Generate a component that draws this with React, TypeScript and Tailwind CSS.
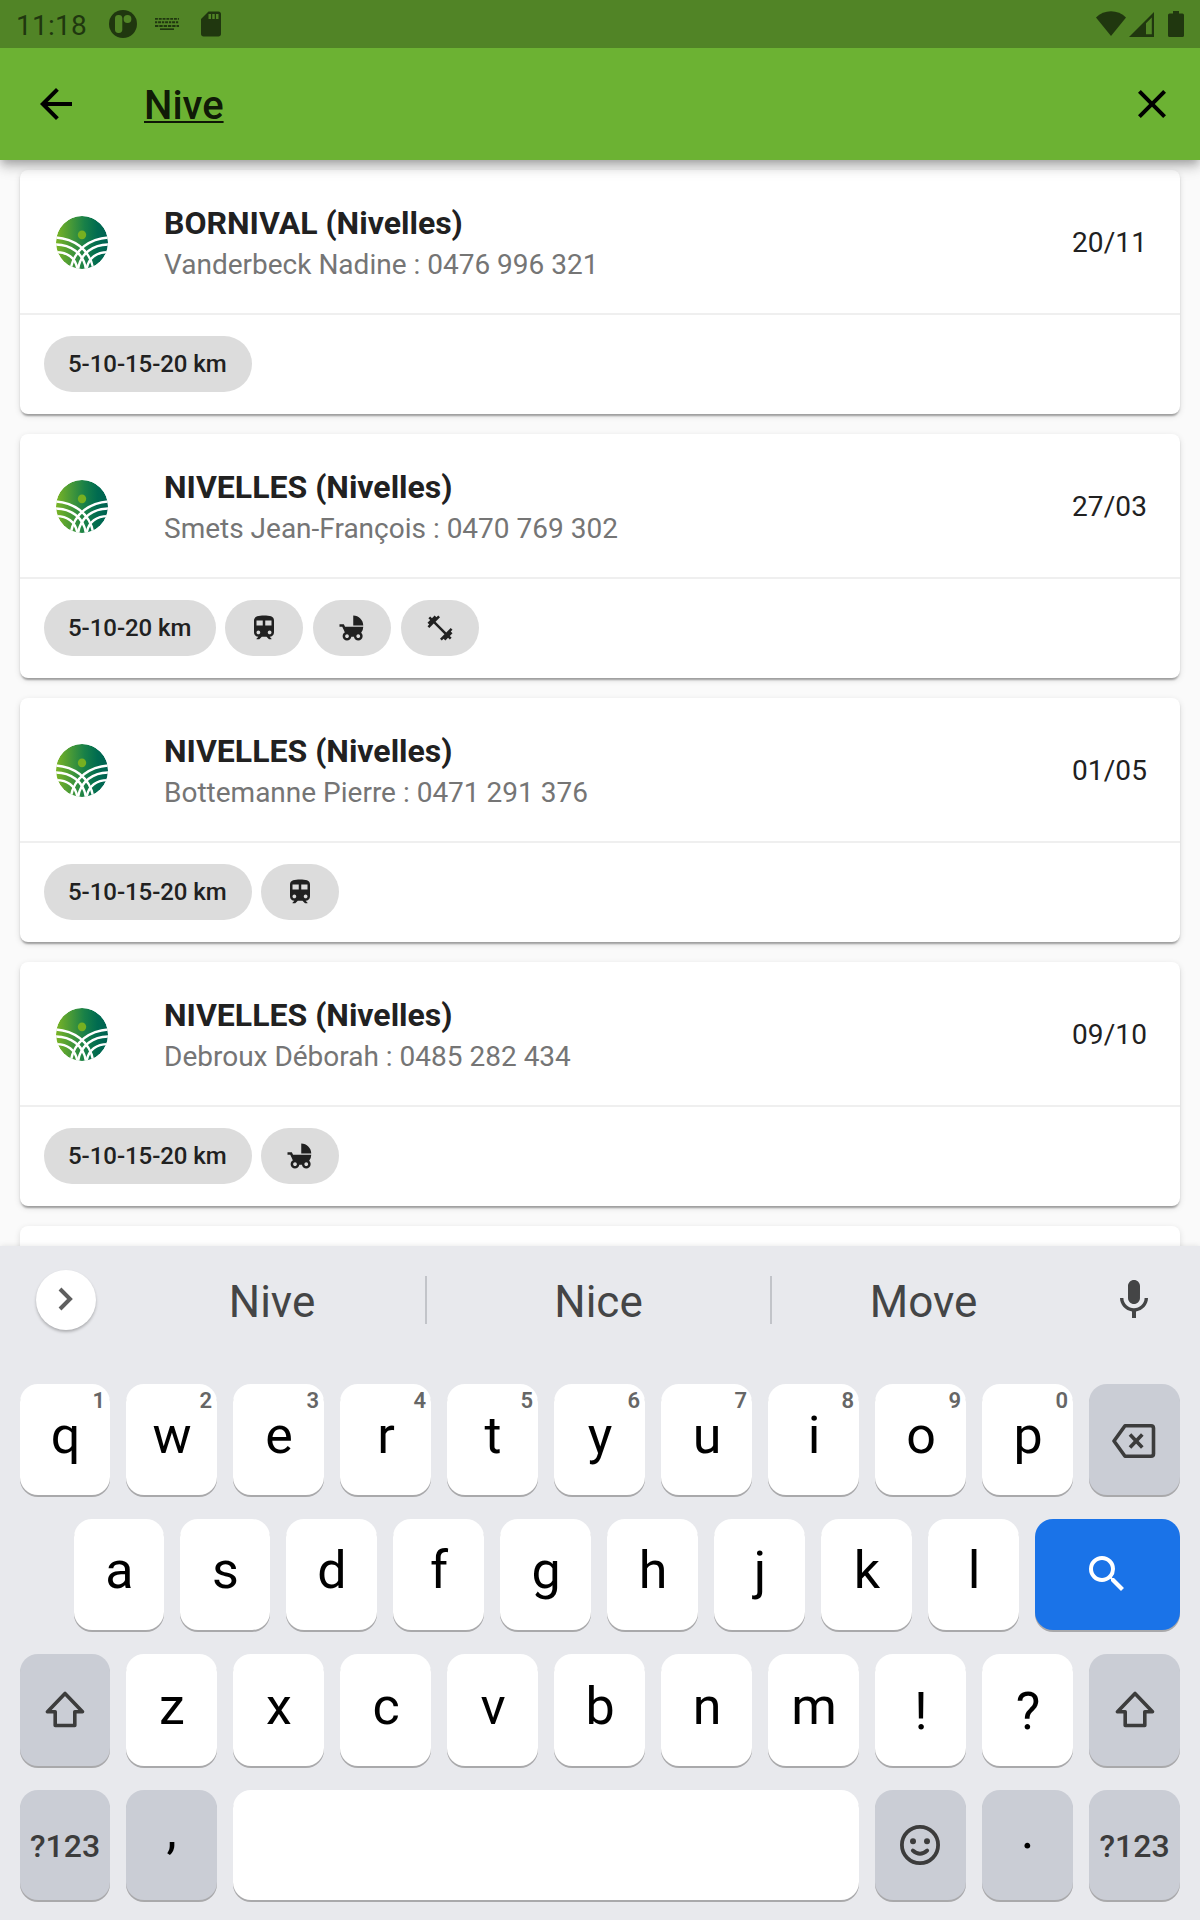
import type { ReactNode } from 'react';
import { MdArrowBack, MdClose, MdSdCard, MdTrain, MdChildFriendly, MdFitnessCenter, MdMic, MdSearch } from 'react-icons/md';

type Service = 'train' | 'stroller' | 'fitness';

interface Walk {
  town: string;
  contact: string;
  date: string;
  distances: string;
  services: Service[];
}

const walks: Walk[] = [
  { town: 'BORNIVAL (Nivelles)', contact: 'Vanderbeck Nadine : 0476 996 321', date: '20/11', distances: '5-10-15-20 km', services: [] },
  { town: 'NIVELLES (Nivelles)', contact: 'Smets Jean-François : 0470 769 302', date: '27/03', distances: '5-10-20 km', services: ['train', 'stroller', 'fitness'] },
  { town: 'NIVELLES (Nivelles)', contact: 'Bottemanne Pierre : 0471 291 376', date: '01/05', distances: '5-10-15-20 km', services: ['train'] },
  { town: 'NIVELLES (Nivelles)', contact: 'Debroux Déborah : 0485 282 434', date: '09/10', distances: '5-10-15-20 km', services: ['stroller'] },
];

const serviceIcons: Record<Service, ReactNode> = {
  train: <MdTrain size={30} />,
  stroller: <MdChildFriendly size={30} />,
  fitness: <MdFitnessCenter size={30} />,
};

function StatusBar() {
  return (
    <div className="relative z-20 flex h-12 shrink-0 items-center bg-[#518426] pl-4 text-[#20370f]">
      <span className="mt-[3px] w-[93px] text-[28px] leading-[34px] tracking-[0.25px]">11:18</span>
      <svg className="size-7" viewBox="0 0 28 28">
        <circle cx="14" cy="14" r="14" fill="currentColor" />
        <rect x="6" y="5" width="7.3" height="18" rx="3.4" fill="#518426" />
        <circle cx="18.5" cy="9" r="3.9" fill="#518426" />
      </svg>
      <svg className="ml-[18px] h-3 w-6" viewBox="0 0 24 12" stroke="currentColor" strokeWidth="1.9">
        <path d="M0 .9h24" strokeDasharray="2.9 .9" />
        <path d="M0 4.3h24" strokeDasharray="2.2 .9 3 .9" />
        <path d="M0 8h24" strokeDasharray="3.4 .9" />
        <path d="M5 11.2h14" strokeWidth="1.7" />
      </svg>
      <MdSdCard size={30} className="ml-[17px]" />
      <svg className="ml-auto mt-[-1px] h-[25px] w-[30px]" viewBox="0 0 30 25" fill="currentColor">
        <path d="M15 25 0 6.500C8-1.900 22-1.900 30 6.500Z" />
      </svg>
      <svg className="ml-[3px] h-[25px] w-[25px]" viewBox="0 0 25 25" fill="currentColor" fillRule="evenodd">
        <path d="M25 0v25H0ZM22.800 5.500 17 11.300V22.300H22.800Z" />
      </svg>
      <svg className="mr-4 ml-[14px] h-[26px] w-4" viewBox="0 0 16 26" fill="currentColor">
        <path d="M5 0h6v2.500h3.400q1.600 0 1.600 1.600v20.300q0 1.600-1.600 1.600H1.600Q0 26 0 24.400V4.100q0-1.600 1.600-1.600H5Z" />
      </svg>
    </div>
  );
}

function SearchBar() {
  return (
    <header className="relative z-10 flex h-28 shrink-0 items-center bg-[#6cb233] pr-6 pl-8 text-black shadow-[0_4px_8px_-2px_rgba(0,0,0,0.2),0_8px_10px_0_rgba(0,0,0,0.14),0_2px_20px_0_rgba(0,0,0,0.12)]">
      <MdArrowBack size={48} />
      <span className="mt-1 ml-16 flex-1 text-[40px] leading-[48px] font-medium text-black/87 underline decoration-2 underline-offset-2 [text-decoration-skip-ink:none]">
        Nive
      </span>
      <MdClose size={48} />
    </header>
  );
}

function ClubLogo() {
  return (
    <svg className="mt-0.5 h-[53px] w-[52px]" viewBox="0 0 52 52" preserveAspectRatio="none">
      <defs>
        <linearGradient id="club" x1="0" y1="0" x2="1" y2="0">
          <stop offset="0" stopColor="#7ab425" />
          <stop offset="0.55" stopColor="#188048" />
          <stop offset="0.8" stopColor="#006b50" />
          <stop offset="1" stopColor="#006152" />
        </linearGradient>
        <clipPath id="disc">
          <circle cx="26" cy="26" r="26" />
        </clipPath>
      </defs>
      <g clipPath="url(#disc)">
        <circle cx="26" cy="26" r="26" fill="url(#club)" />
        <circle cx="26" cy="18.500" r="4.200" fill="#76b021" />
        <g fill="none" stroke="#fff" strokeWidth="2.400">
          <path d="M-1 21C17 22 34 32 37.500 53" />
          <path d="M-1 28C14 28 28 36 30 53" />
          <path d="M-1 35.500C11 35 20 41 21.500 53" />
          <path d="M53 21C35 22 18 32 14.500 53" />
          <path d="M53 28C38 28 24 36 22 53" />
          <path d="M53 35.500C41 35 32 41 30.500 53" />
        </g>
      </g>
    </svg>
  );
}

function WalkCard({ walk }: { walk: Walk }) {
  return (
    <article className="h-[244px] shrink-0 rounded-lg bg-white text-[#212121] shadow-[0_4px_2px_-2px_rgba(0,0,0,0.2),0_2px_2px_0_rgba(0,0,0,0.14),0_2px_6px_0_rgba(0,0,0,0.12)]">
      <div className="flex h-[145px] items-center border-b-2 border-[#efefef] pr-[33px] pl-9">
        <ClubLogo />
        <div className="mt-[3px] ml-14 flex-1">
          <h2 className="text-[32px] leading-[38px] font-bold">{walk.town}</h2>
          <p className="mt-1.5 text-[28px] leading-[34px] text-[#757575]">{walk.contact}</p>
        </div>
        <time className="mt-0.5 text-[28px] leading-[34px] tracking-[0.1px]">{walk.date}</time>
      </div>
      <div className="flex gap-2.5 px-6 pt-[21px]">
        <span className="-mr-px flex h-14 items-center rounded-full bg-[#dcdcdc] pr-[25px] pl-6 text-2xl font-medium tracking-[-0.05px]">{walk.distances}</span>
        {walk.services.map((service) => (
          <span key={service} className="flex h-14 w-[78px] items-center justify-center rounded-full bg-[#dcdcdc]">
            {serviceIcons[service]}
          </span>
        ))}
      </div>
    </article>
  );
}

const tones = {
  light: 'bg-white text-black',
  dark: 'bg-[#cacdd5] text-[#3c3c3c]',
  blue: 'bg-[#1a73e8] text-white',
};

function Key({ tone = 'light', className = '', children }: { tone?: keyof typeof tones; className?: string; children?: ReactNode }) {
  return (
    <div className={`relative flex min-w-0 justify-center rounded-[18px] shadow-[0_2px_0_#a9a9ab] ${tones[tone]} ${className}`}>{children}</div>
  );
}

function Letter({ char, hint, offset = 'mt-[22px]' }: { char: string; hint?: string; offset?: string }) {
  return (
    <Key>
      <span className={`ml-px text-[52px] leading-[60px] ${offset}`}>{char}</span>
      {hint && <span className="absolute top-1 right-[5px] text-[22px] leading-[26px] font-semibold text-[#666]">{hint}</span>}
    </Key>
  );
}

function SymbolsKey() {
  return (
    <Key tone="dark">
      <span className="mt-9 text-[32px] leading-10 font-medium">?123</span>
    </Key>
  );
}

function ShiftKey() {
  return (
    <Key tone="dark" className="items-start">
      <svg className="mt-[37px] h-[37px] w-10" viewBox="0 0 40 37" fill="none" stroke="currentColor" strokeWidth="3.600" strokeLinejoin="round">
        <path d="M20 2.500 2.500 20.800H10.200V34.500H29.800V20.800H37.500Z" />
      </svg>
    </Key>
  );
}

function Keyboard() {
  return (
    <section className="relative z-10 flex h-[674px] shrink-0 flex-col bg-[#e8e9ed] shadow-[0_0_6px_rgba(0,0,0,0.1)]">
      <div className="flex h-[138px] items-start pt-6 text-[44px] leading-[52px] text-[#444546]">
        <div className="ml-9 flex size-[60px] items-center justify-center rounded-full bg-white shadow-[0_2px_3px_rgba(0,0,0,0.25)]">
          <svg className="-mt-0.5 -ml-px h-6 w-4" viewBox="0 0 16 24" fill="none" stroke="#5f5f5f" strokeWidth="4">
            <path d="M2 2 12 12 2 22" />
          </svg>
        </div>
        <span className="mt-1.5 ml-[23px] w-[306px] text-center">Nive</span>
        <span className="mt-1.5 h-12 w-0.5 bg-[#c2c4c9]" />
        <span className="mt-1.5 w-[343px] text-center">Nice</span>
        <span className="mt-1.5 h-12 w-0.5 bg-[#c2c4c9]" />
        <span className="mt-1.5 w-[303px] text-center">Move</span>
        <MdMic size={48} className="mt-1.5 ml-[35px]" />
      </div>

      <div className="grid h-[111px] grid-cols-[90px_repeat(10,91px)] gap-4 px-5">
        {'qwertyuiop'.split('').map((char, i) => (
          <Letter key={char} char={char} hint={String((i + 1) % 10)} />
        ))}
        <Key tone="dark" className="items-start">
          <svg className="mt-10 -ml-0.5 h-[34px] w-[44px]" viewBox="0 0 44 34" fill="none" stroke="currentColor" strokeWidth="3.600" strokeLinejoin="round">
            <path d="M13 1.800H39Q41.500 1.800 41.500 4.300V29.700Q41.500 32.200 39 32.200H13L2 17Z" />
            <path d="M18 10.500 30.300 23.500M30.300 10.500 18 23.500" />
          </svg>
        </Key>
      </div>

      <div className="mt-6 grid h-[111px] grid-cols-[90px_90px_repeat(7,91px)_145px] gap-4 pr-5 pl-[74px]">
        {'asdfghjkl'.split('').map((char) => (
          <Letter key={char} char={char} />
        ))}
        <Key tone="blue" className="items-start">
          <MdSearch size={48} className="mt-[31px] -ml-0.5" />
        </Key>
      </div>

      <div className="mt-6 grid h-28 grid-cols-[90px_repeat(10,91px)] gap-4 px-5">
        <ShiftKey />
        {'zxcvbnm'.split('').map((char) => (
          <Letter key={char} char={char} offset="mt-[23px]" />
        ))}
        <Letter char="!" offset="mt-7" />
        <Letter char="?" offset="mt-7" />
        <ShiftKey />
      </div>

      <div className="mt-6 grid h-[110px] grid-cols-[90px_repeat(10,91px)] gap-4 px-5">
        <SymbolsKey />
        <Key tone="dark">
          <span className="mt-[11px] text-[52px] leading-[60px] text-black">,</span>
        </Key>
        <Key className="col-span-6" />
        <Key tone="dark" className="items-start">
          <svg className="mt-[35px] -ml-px size-10" viewBox="0 0 40 40" fill="none" stroke="currentColor" strokeWidth="3.800">
            <circle cx="20" cy="20" r="18.100" />
            <circle cx="13" cy="16.300" r="3" fill="currentColor" stroke="none" />
            <circle cx="27" cy="16.300" r="3" fill="currentColor" stroke="none" />
            <path d="M12.800 25.500Q20 32 27.200 25.500" strokeLinecap="round" />
          </svg>
        </Key>
        <Key tone="dark">
          <span className="mt-[11px] text-[52px] leading-[60px] text-black">.</span>
        </Key>
        <SymbolsKey />
      </div>
    </section>
  );
}

export default function App() {
  return (
    <div className="flex h-[1920px] w-[1200px] flex-col overflow-hidden bg-[#fafafa] font-[Roboto,sans-serif]">
      <StatusBar />
      <SearchBar />
      <main className="flex h-[1086px] shrink-0 flex-col gap-5 overflow-hidden px-5 pt-2.5">
        {walks.map((walk) => (
          <WalkCard key={walk.contact} walk={walk} />
        ))}
        <div className="h-10 shrink-0 rounded-t-lg bg-white shadow-[0_2px_6px_0_rgba(0,0,0,0.12)]" />
      </main>
      <Keyboard />
    </div>
  );
}
